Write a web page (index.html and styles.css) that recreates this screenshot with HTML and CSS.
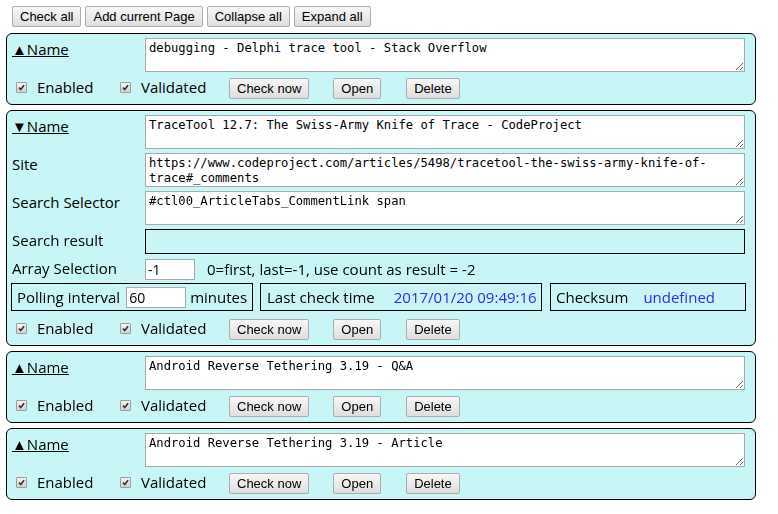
FILE: index.html
```html
<!DOCTYPE html>
<html lang="en">
<head>
<meta charset="utf-8">
<title>Page watcher</title>
<link rel="stylesheet" href="styles.css">
</head>
<body>
<div class="toolbar">
  <button class="btn">Check all</button>
  <button class="btn">Add current Page</button>
  <button class="btn">Collapse all</button>
  <button class="btn">Expand all</button>
</div>

<div class="list">
  <section class="card">
    <div class="row">
      <a class="label name">▲Name</a>
      <textarea class="field">debugging - Delphi trace tool - Stack Overflow</textarea>
    </div>
    <div class="cbrow">
      <span class="check"><span class="cb"><svg viewBox="0 0 10 10"><path d="M2.2 5.2 L4.2 7.3 L7.9 2.6"/></svg></span>Enabled</span>
      <span class="check second"><span class="cb"><svg viewBox="0 0 10 10"><path d="M2.2 5.2 L4.2 7.3 L7.9 2.6"/></svg></span>Validated</span>
      <button class="btn">Check now</button>
      <button class="btn open">Open</button>
      <button class="btn">Delete</button>
    </div>
  </section>

  <section class="card">
    <div class="row">
      <a class="label name">▼Name</a>
      <textarea class="field">TraceTool 12.7: The Swiss-Army Knife of Trace - CodeProject</textarea>
    </div>
    <div class="row">
      <span class="label">Site</span>
      <textarea class="field">https://www.codeproject.com/articles/5498/tracetool-the-swiss-army-knife-of-trace#_comments</textarea>
    </div>
    <div class="row">
      <span class="label">Search Selector</span>
      <textarea class="field">#ctl00_ArticleTabs_CommentLink span</textarea>
    </div>
    <div class="row row-result">
      <span class="label">Search result</span>
      <div class="result"></div>
    </div>
    <div class="row row-array">
      <span class="label">Array Selection</span>
      <input class="num arr" type="text" value="-1">
      <span class="hint">0=first, last=-1, use count as result = -2</span>
    </div>
    <div class="stats">
      <div class="box">Polling interval <input class="num poll" type="text" value="60"> minutes</div>
      <div class="box box-time">Last check time<span class="val">2017/01/20 09:49:16</span></div>
      <div class="box box-sum">Checksum<span class="val">undefined</span></div>
    </div>
    <div class="cbrow">
      <span class="check"><span class="cb"><svg viewBox="0 0 10 10"><path d="M2.2 5.2 L4.2 7.3 L7.9 2.6"/></svg></span>Enabled</span>
      <span class="check second"><span class="cb"><svg viewBox="0 0 10 10"><path d="M2.2 5.2 L4.2 7.3 L7.9 2.6"/></svg></span>Validated</span>
      <button class="btn">Check now</button>
      <button class="btn open">Open</button>
      <button class="btn">Delete</button>
    </div>
  </section>

  <section class="card">
    <div class="row">
      <a class="label name">▲Name</a>
      <textarea class="field">Android Reverse Tethering 3.19 - Q&amp;A</textarea>
    </div>
    <div class="cbrow">
      <span class="check"><span class="cb"><svg viewBox="0 0 10 10"><path d="M2.2 5.2 L4.2 7.3 L7.9 2.6"/></svg></span>Enabled</span>
      <span class="check second"><span class="cb"><svg viewBox="0 0 10 10"><path d="M2.2 5.2 L4.2 7.3 L7.9 2.6"/></svg></span>Validated</span>
      <button class="btn">Check now</button>
      <button class="btn open">Open</button>
      <button class="btn">Delete</button>
    </div>
  </section>

  <section class="card">
    <div class="row">
      <a class="label name">▲Name</a>
      <textarea class="field">Android Reverse Tethering 3.19 - Article</textarea>
    </div>
    <div class="cbrow">
      <span class="check"><span class="cb"><svg viewBox="0 0 10 10"><path d="M2.2 5.2 L4.2 7.3 L7.9 2.6"/></svg></span>Enabled</span>
      <span class="check second"><span class="cb"><svg viewBox="0 0 10 10"><path d="M2.2 5.2 L4.2 7.3 L7.9 2.6"/></svg></span>Validated</span>
      <button class="btn">Check now</button>
      <button class="btn open">Open</button>
      <button class="btn">Delete</button>
    </div>
  </section>
</div>
</body>
</html>
```

FILE: styles.css
```css
html, body {
  margin: 0;
  background: #ffffff;
}

body {
  padding: 6px 0 0 6px;
  font-family: "Open Sans", "Noto Sans", sans-serif;
  font-size: 15px;
  color: #000;
}

.toolbar {
  display: flex;
  gap: 4px;
  padding-left: 6px;
  margin-bottom: 6px;
}

.btn {
  font-family: "Liberation Sans", Arial, sans-serif;
  font-size: 13px;
  line-height: 15px;
  height: 21px;
  padding: 2px 7px;
  margin: 0;
  border: 1px solid #adadad;
  border-radius: 2px;
  background: linear-gradient(#f7f7f7, #dedede);
  color: #000;
  box-sizing: border-box;
}

.list {
  display: flex;
  flex-direction: column;
  gap: 5px;
}

.card {
  width: 750px;
  box-sizing: border-box;
  border: 1px solid #000;
  border-radius: 6px;
  background: #c8f5f5;
  padding: 4px 9px 5px 5px;
}

.row {
  display: flex;
  align-items: flex-start;
  margin-bottom: 4px;
}

.label {
  width: 133px;
  flex: none;
  line-height: 21px;
  padding-top: 1px;
}

.name {
  text-decoration: underline;
  color: #000;
}

.field {
  width: 600px;
  height: 34px;
  box-sizing: border-box;
  margin: 0;
  padding: 2px 3px;
  border: 1px solid #a9a9a9;
  font-family: "DejaVu Sans Mono", monospace;
  font-size: 12.2px;
  line-height: 15px;
  color: #000;
  background: #fff;
  resize: both;
}

.row-result {
  margin-bottom: 5px;
}

.result {
  width: 600px;
  height: 25px;
  box-sizing: border-box;
  border: 1px solid #000;
}

.row-array {
  align-items: center;
  height: 21px;
  margin-bottom: 3px;
}

.row-array .label {
  padding-top: 0;
  margin-top: -2px;
}

.row-array .hint {
  margin-top: -2px;
}

.num {
  box-sizing: border-box;
  height: 21px;
  margin: 0;
  padding: 1px 2px;
  border: 1px solid #a9a9a9;
  background: #fff;
  font-family: "Open Sans", "Noto Sans", sans-serif;
  font-size: 14px;
  color: #000;
}

.arr {
  width: 50px;
}

.hint {
  margin-left: 12px;
}

.stats {
  display: grid;
  grid-template-columns: 242px 282px 197px;
  column-gap: 7px;
  margin-left: -1px;
  margin-bottom: 8px;
}

.stats .box:nth-child(3) {
  margin-left: 1px;
}

.box {
  height: 28px;
  box-sizing: border-box;
  border: 1px solid #000;
  display: flex;
  align-items: center;
  padding-left: 5px;
  white-space: nowrap;
}

.poll {
  width: 60px;
  margin: 0 4px 0 6px;
}

.box-time {
  padding-left: 6px;
}

.box-time .val {
  margin-left: 19px;
}

.box-sum .val {
  margin-left: 15px;
}

.val {
  color: #2b2bff;
}

.cbrow {
  display: flex;
  align-items: center;
  height: 21px;
  margin-top: 6px;
}

.check {
  display: flex;
  align-items: center;
  width: 104px;
  flex: none;
  margin-top: -3px;
}

.check.second {
  width: 113px;
}

.cb {
  width: 11px;
  height: 11px;
  box-sizing: border-box;
  margin: 0 10px 0 4px;
  border: 1px solid #9c9c9c;
  border-radius: 1px;
  background: linear-gradient(#f2f2f2, #d4d4d4);
  display: flex;
  align-items: center;
  justify-content: center;
}

.cb svg {
  width: 9px;
  height: 9px;
}

.cb path {
  fill: none;
  stroke: #333;
  stroke-width: 1.8;
}

.cbrow .btn {
  margin-right: 24px;
}

.cbrow .btn.open {
  margin-right: 25px;
}
```
